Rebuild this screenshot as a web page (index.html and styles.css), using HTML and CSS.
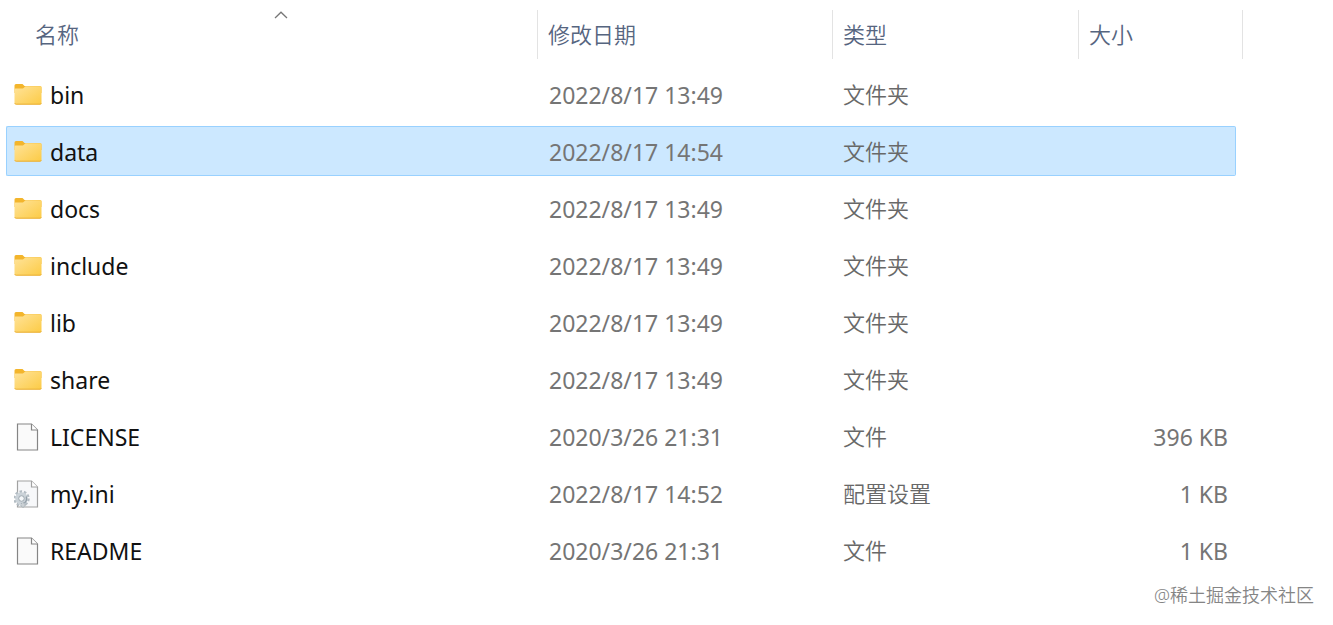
FILE: index.html
```html
<!DOCTYPE html>
<html lang="zh-CN">
<head>
<meta charset="utf-8">
<meta name="viewport" content="width=device-width, initial-scale=1">
<title>文件列表</title>
<link rel="stylesheet" href="styles.css">
</head>
<body>
<svg class="defs" aria-hidden="true">
  <defs>
    <linearGradient id="folder-fill" x1="0" y1="0" x2="1" y2="1">
      <stop offset="0" stop-color="#ffe39a"/>
      <stop offset="1" stop-color="#fccb45"/>
    </linearGradient>
    <symbol id="folder" viewBox="0 0 28 28">
      <path d="M.5 4.500Q.5 3 2 3H8.500L10.500 5H26Q27.500 5 27.500 6.500V12H.5Z" fill="#f3b52c"/>
      <path d="M.5 8.500Q.5 7.500 1.500 7.500H9L11.500 5.200H26.500Q27.500 5.200 27.500 6.200V22Q27.500 23.500 26 23.500H2Q.5 23.500 .5 22Z" fill="url(#folder-fill)"/>
      <path d="M.8 22.300Q1.200 23.200 2.200 23.200H26Q27 23.200 27.300 22.300" fill="none" stroke="#e9ae35"/>
    </symbol>
    <symbol id="file" viewBox="0 0 28 28">
      <path d="M3.500 1H17.500L23.500 7V27H3.500Z" fill="#fafafa" stroke="#858585" stroke-width="1.200"/>
      <path d="M17.500 1V7H23.500" fill="#fff" stroke="#858585" stroke-width="1.200"/>
    </symbol>
    <symbol id="config" viewBox="0 0 28 28">
      <path d="M3.500 1H17.500L23.500 7V27H3.500Z" fill="#f7f8fa" stroke="#a2a2a2" stroke-width="1.200"/>
      <path d="M17.500 1V7H23.500" fill="#fff" stroke="#a2a2a2" stroke-width="1.200"/>
      <circle cx="7.500" cy="18.500" r="6.800" fill="none" stroke="#b3bcc3" stroke-width="2.800" stroke-dasharray="2.500 1.770"/>
      <circle cx="7.500" cy="18.500" r="4.600" fill="none" stroke="#cbd3d9" stroke-width="3.400"/>
      <circle cx="7.500" cy="18.500" r="2.800" fill="#f4f7f9" stroke="#98a4ac"/>
      <path d="M9.500 23.500Q13.500 21.500 12.300 16.500" fill="none" stroke="#929ea7" stroke-width="1.300"/>
      <circle cx="9" cy="25" r="2.200" fill="#cbd1d5" stroke="#a1abb2" stroke-width="1" stroke-dasharray="1.500 .8"/>
    </symbol>
  </defs>
</svg>
<main class="explorer">
  <table class="files">
    <colgroup><col><col class="col-date"><col class="col-type"><col class="col-size"></colgroup>
    <thead>
      <tr>
        <th scope="col" class="head head-name" aria-sort="ascending"><button type="button" class="sort">名称</button><svg class="caret" viewBox="0 0 14 8" aria-hidden="true"><path d="M1 7L7 1.200L13 7" fill="none" stroke="#777" stroke-width="1.300"/></svg></th>
        <th scope="col" class="head"><button type="button" class="sort">修改日期</button></th>
        <th scope="col" class="head"><button type="button" class="sort">类型</button></th>
        <th scope="col" class="head head-last"><button type="button" class="sort">大小</button></th>
      </tr>
    </thead>
    <tbody>
      <tr><td class="cell"><div class="name"><svg class="icon" aria-hidden="true"><use href="#folder"/></svg><span>bin</span></div></td><td class="cell">2022/8/17 13:49</td><td class="cell type">文件夹</td><td class="cell size"></td></tr>
      <tr class="selected" aria-selected="true"><td class="cell"><div class="name"><svg class="icon" aria-hidden="true"><use href="#folder"/></svg><span>data</span></div></td><td class="cell">2022/8/17 14:54</td><td class="cell type">文件夹</td><td class="cell size"></td></tr>
      <tr><td class="cell"><div class="name"><svg class="icon" aria-hidden="true"><use href="#folder"/></svg><span>docs</span></div></td><td class="cell">2022/8/17 13:49</td><td class="cell type">文件夹</td><td class="cell size"></td></tr>
      <tr><td class="cell"><div class="name"><svg class="icon" aria-hidden="true"><use href="#folder"/></svg><span>include</span></div></td><td class="cell">2022/8/17 13:49</td><td class="cell type">文件夹</td><td class="cell size"></td></tr>
      <tr><td class="cell"><div class="name"><svg class="icon" aria-hidden="true"><use href="#folder"/></svg><span>lib</span></div></td><td class="cell">2022/8/17 13:49</td><td class="cell type">文件夹</td><td class="cell size"></td></tr>
      <tr><td class="cell"><div class="name"><svg class="icon" aria-hidden="true"><use href="#folder"/></svg><span>share</span></div></td><td class="cell">2022/8/17 13:49</td><td class="cell type">文件夹</td><td class="cell size"></td></tr>
      <tr><td class="cell"><div class="name"><svg class="icon" aria-hidden="true"><use href="#file"/></svg><span>LICENSE</span></div></td><td class="cell">2020/3/26 21:31</td><td class="cell type">文件</td><td class="cell size">396 KB</td></tr>
      <tr><td class="cell"><div class="name"><svg class="icon" aria-hidden="true"><use href="#config"/></svg><span>my.ini</span></div></td><td class="cell">2022/8/17 14:52</td><td class="cell type">配置设置</td><td class="cell size">1 KB</td></tr>
      <tr><td class="cell"><div class="name"><svg class="icon" aria-hidden="true"><use href="#file"/></svg><span>README</span></div></td><td class="cell">2020/3/26 21:31</td><td class="cell type">文件</td><td class="cell size">1 KB</td></tr>
    </tbody>
  </table>
</main>
<footer class="credit">@稀土掘金技术社区</footer>
</body>
</html>
```
FILE: styles.css
```css
* {
  box-sizing: border-box;
}

body {
  margin: 0;
  background: #fff;
  color: #757575;
  font-family: "Noto Sans", "Noto Sans CJK SC", sans-serif;
  font-size: 23px;
  line-height: 32px;
}

.defs {
  position: absolute;
  width: 0;
  height: 0;
}

.explorer {
  padding: 3px 97px 0 6px;
}

.files {
  width: 100%;
  table-layout: fixed;
  border-collapse: separate;
  border-spacing: 0 7px;
}

.col-date {
  width: 295px;
}

.col-type {
  width: 246px;
}

.col-size {
  width: 158px;
}

.head {
  position: relative;
  height: 52px;
  padding: 0 0 4px 11px;
  text-align: left;
  font-weight: 400;
}

.head-name {
  padding-left: 29px;
}

.head + .head::before,
.head-last::after {
  content: "";
  position: absolute;
  top: 0;
  bottom: 3px;
  left: 0;
  width: 1px;
  background: #e3e3e3;
}

.head-last::after {
  left: auto;
  right: -7px;
}

.sort {
  display: block;
  padding: 0;
  border: 0;
  background: none;
  color: #56657f;
  font: inherit;
  font-size: 22px;
  font-weight: 350;
}

.caret {
  position: absolute;
  top: 1px;
  left: calc(50% + 2px);
  width: 14px;
  height: 8px;
}

.cell {
  height: 50px;
  padding: 2px 0 0 12px;
  border: 1px solid transparent;
  border-width: 1px 0;
  white-space: nowrap;
}

.cell:first-child {
  padding-left: 7px;
  border-left-width: 1px;
  border-radius: 2px 0 0 2px;
}

.cell:last-child {
  border-right-width: 1px;
  border-radius: 0 2px 2px 0;
}

.cell.type {
  padding: 0 0 0 11px;
  color: #686868;
  font-size: 22px;
  font-weight: 350;
}

.cell.size {
  padding-right: 7px;
  text-align: right;
}

.name {
  display: flex;
  align-items: center;
  gap: 8px;
  color: #111;
}

.icon {
  flex: none;
  width: 28px;
  height: 28px;
}

.selected .cell {
  border-color: #99d1ff;
  background: #cce8ff;
}

.credit {
  padding: 1px 19px 0 0;
  color: #858585;
  font-size: 18px;
  font-weight: 350;
  line-height: 24px;
  text-align: right;
}
```
